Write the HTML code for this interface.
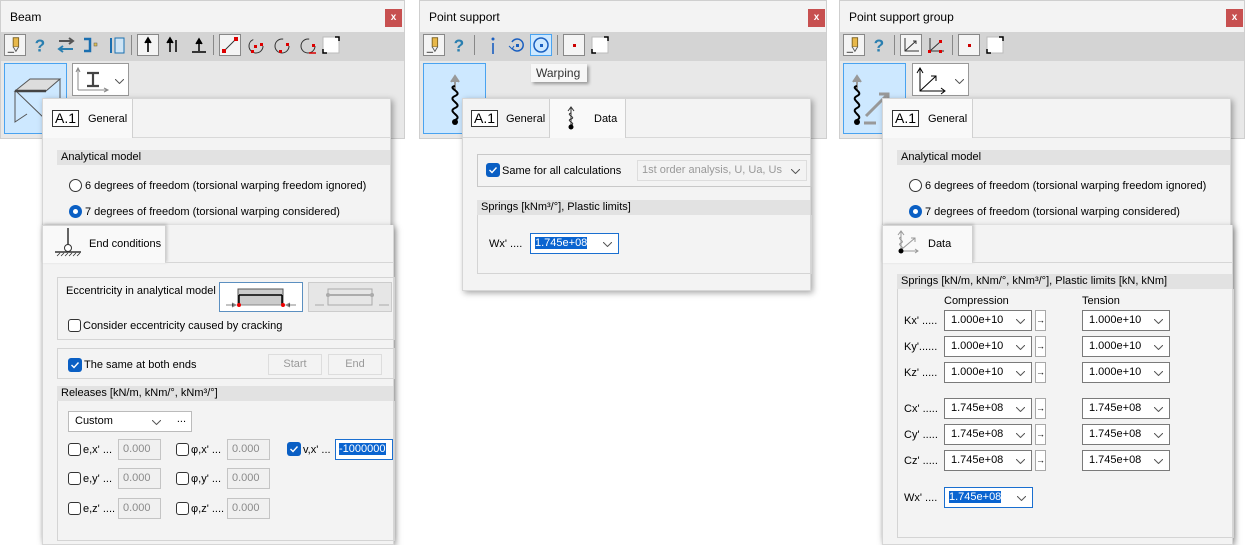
<!DOCTYPE html>
<html><head><meta charset="utf-8"><style>
body{margin:0;width:1245px;height:529px;background:#fff;position:relative;overflow:hidden;font:11px "Liberation Sans","DejaVu Sans",sans-serif;color:#000}
.a{position:absolute}
.t{position:absolute;white-space:nowrap;font-size:11px;line-height:14px}
.win{position:absolute;background:#e8e8e8;border:1px solid #cfcfcf;box-sizing:border-box}
.ttl{position:absolute;left:0;right:0;top:0;height:31px;background:#f3f3f3}
.tb{position:absolute;left:0;right:0;top:31px;height:29px;background:#d4d4d4}
.x{position:absolute;width:17px;height:18px;background:#c75050;color:#fff;font-size:10px;font-weight:bold;text-align:center;line-height:17px;top:8px}
.big{position:absolute;background:#cde8ff;border:1px solid #4aa3f0;box-sizing:border-box}
.pan{position:absolute;background:#f3f3f3;box-shadow:2px 2px 6px rgba(0,0,0,.35);border:1px solid #d6d6d6;box-sizing:border-box}
.tab{position:absolute;background:#f9f9f9;border-right:1px solid #d0d0d0;box-sizing:border-box}
.hd{position:absolute;background:#e2e2e2;height:15px;line-height:15px;padding-left:4px;box-sizing:border-box;white-space:nowrap}
.box{position:absolute;border:1px solid #d4d4d4;box-sizing:border-box}
.cb{position:absolute;width:13px;height:13px;border:1px solid #333;border-radius:3px;background:#fff;box-sizing:border-box}
.cbk{position:absolute;width:14px;height:14px;border-radius:3px;background:#0a5fc4}
.rd{position:absolute;width:13px;height:13px;border:1px solid #333;border-radius:50%;background:#fff;box-sizing:border-box}
.rds{position:absolute;width:13px;height:13px;border-radius:50%;background:#0a5fc4;box-sizing:border-box}
.rds:after{content:"";position:absolute;left:4px;top:4px;width:5px;height:5px;border-radius:50%;background:#fff}
.in{position:absolute;height:21px;background:#fff;border:1px solid #7a7a7a;box-sizing:border-box;line-height:19px;padding-left:6px;white-space:nowrap}
.in svg{position:absolute;right:6px;top:8px}
.dis{position:absolute;height:21px;background:#f0f0f0;border:1px solid #c4c4c4;box-sizing:border-box;line-height:19px;padding-left:4px;color:#8a8a8a;white-space:nowrap}
.ar{position:absolute;width:11px;height:21px;border:1px solid #a8a8a8;background:#fff;box-sizing:border-box;font-size:9px;line-height:19px;text-align:center}
.sel{background:#0a64d0;color:#fff}
.a1{position:absolute;border:1px solid #333;font-size:14px;line-height:15px;padding:0 2px;background:#fff}
.btn{position:absolute;border:1px solid #ddd;background:#f3f3f3;color:#999;text-align:center;line-height:19px;box-sizing:border-box;height:21px}
.tbi{position:absolute;top:34px;width:22px;height:22px;box-sizing:border-box}
.tbb{border:1px solid #888;background:#f4f4f4}
.sep{position:absolute;top:35px;width:1px;height:20px;background:#888}
</style></head><body>
<svg width="0" height="0" style="position:absolute"><defs>
<symbol id="chev" viewBox="0 0 9 5"><path d="M0 0L4.5 4.5L9 0" stroke="#555" fill="none"/></symbol>
<symbol id="pen" viewBox="0 0 22 22"><rect x="9" y="3" width="6" height="10" fill="#e8b84a" stroke="#7a6020"/><path d="M9 13L12 18L15 13" fill="#eee" stroke="#555"/><path d="M3 19H10" stroke="#333"/></symbol>
<symbol id="q" viewBox="0 0 22 22"><text x="4" y="18" font-size="19" font-weight="bold" fill="#2a7fb0" font-family="Liberation Sans">?</text></symbol>
<symbol id="chk" viewBox="0 0 14 14"><path d="M3.5 7L6 9.5L10.5 4.5" stroke="#fff" stroke-width="1.4" fill="none"/></symbol>
<symbol id="sqr" viewBox="0 0 22 22"><rect x="3" y="3" width="16" height="16" fill="#fff" stroke="#bbb"/><path d="M3 15V19H7M15 3H19V7" stroke="#000" stroke-width="1.5" fill="none"/></symbol>
</defs></svg>

<!-- ===== WINDOW 1: Beam ===== -->
<div class="win" style="left:0;top:0;width:405px;height:139px">
 <div class="ttl"><span class="t" style="left:9px;top:9px;font-size:12px">Beam</span><div class="x" style="left:384px">x</div></div>
 <div class="tb"></div>
</div>
<div class="tbi tbb" style="left:4px"><svg width="20" height="20"><use href="#pen"/></svg></div>
<svg class="a" style="left:31px;top:35px" width="20" height="20"><use href="#q"/></svg>
<svg class="a" style="left:55px;top:34px" width="22" height="22"><path d="M4 7H18M14 4L18 7L14 10" stroke="#555" stroke-width="2" fill="none"/><path d="M18 15H4M8 12L4 15L8 18" stroke="#2a7fb0" stroke-width="2" fill="none"/></svg>
<svg class="a" style="left:81px;top:34px" width="22" height="22"><path d="M3 5H9V17H3" stroke="#1a6fb0" stroke-width="2.5" fill="none"/><rect x="13" y="9" width="3" height="3" fill="#e0c050" stroke="#555" stroke-width=".5"/></svg>
<svg class="a" style="left:106px;top:34px" width="22" height="22"><rect x="9" y="4" width="9" height="15" fill="#cfe4f4" stroke="#1a6fb0"/><path d="M5 4V19" stroke="#1a6fb0" stroke-width="2"/></svg>
<div class="sep" style="left:131px"></div>
<div class="tbi tbb" style="left:137px"><svg width="20" height="20"><path d="M10 17V4M7 8L10 3L13 8" stroke="#000" stroke-width="1.6" fill="#000"/></svg></div>
<svg class="a" style="left:162px;top:34px" width="22" height="22"><path d="M8 18V5M5 9L8 4L11 9" stroke="#000" stroke-width="1.5" fill="#000"/><path d="M14 6V18" stroke="#000" stroke-width="1.5"/></svg>
<svg class="a" style="left:188px;top:34px" width="22" height="22"><path d="M11 17V6M8 10L11 5L14 10" stroke="#000" stroke-width="1.5" fill="#000"/><path d="M4 18H18" stroke="#000" stroke-width="1.5"/></svg>
<div class="sep" style="left:213px"></div>
<div class="tbi tbb" style="left:219px"><svg width="20" height="20"><path d="M4 16L16 4" stroke="#333"/><rect x="2" y="14" width="4" height="4" fill="#d00"/><rect x="14" y="2" width="4" height="4" fill="#d00"/></svg></div>
<svg class="a" style="left:245px;top:34px" width="22" height="22"><circle cx="11" cy="12" r="7" fill="none" stroke="#333" stroke-dasharray="30 14"/><rect x="9" y="11" width="3" height="3" fill="#d00"/><rect x="15" y="9" width="3" height="3" fill="#d00"/><rect x="6" y="16" width="3" height="3" fill="#d00"/></svg>
<svg class="a" style="left:271px;top:34px" width="22" height="22"><circle cx="11" cy="12" r="7" fill="none" stroke="#333" stroke-dasharray="34 10"/><rect x="15" y="9" width="3" height="3" fill="#d00"/><rect x="8" y="16" width="3" height="3" fill="#d00"/></svg>
<svg class="a" style="left:297px;top:34px" width="22" height="22"><circle cx="11" cy="12" r="7" fill="none" stroke="#333" stroke-dasharray="34 10"/><rect x="15" y="10" width="3" height="3" fill="#d00"/><path d="M12 19H19" stroke="#d00" stroke-width="1.5"/></svg>
<svg class="a" style="left:320px;top:34px" width="22" height="22"><use href="#sqr"/></svg>
<div class="big" style="left:4px;top:63px;width:63px;height:71px"><svg width="61" height="69"><path d="M10 27L25 15H55L41 27Z" fill="#ddd" stroke="#555"/><path d="M10 27V58L22 50" fill="none" stroke="#555"/><path d="M10 27H41" stroke="#444" stroke-width="2.5"/><path d="M12 28L40 55" stroke="#555"/><path d="M55 15V40" stroke="#555"/></svg></div>
<div class="a" style="left:72px;top:63px;width:57px;height:33px;background:#fff;border:1px solid #999;box-sizing:border-box"><svg width="40" height="31"><path d="M5 26V5M3 8L5 4L7 8M5 26H34M31 24L35 26L31 28" stroke="#888" fill="none"/><path d="M14 9H26M20 9V22M14 22H26" stroke="#444" stroke-width="2.2"/></svg><svg class="a" style="left:42px;top:15px" width="9" height="5"><use href="#chev"/></svg></div>

<!-- panel 1 General -->
<div class="pan" style="left:42px;top:98px;width:349px;height:440px">
 <div class="a" style="left:0;top:0;right:0;height:38px;border-bottom:1px solid #d8d8d8;background:#f3f3f3"></div>
 <div class="tab" style="left:0;top:0;width:90px;height:39px"></div>
 <span class="a1" style="left:9px;top:11px">A.1</span><span class="t" style="left:45px;top:13px">General</span>
 <div class="hd" style="left:14px;top:51px;right:0">Analytical model</div>
 <div class="rd" style="left:26px;top:80px"></div><span class="t" style="left:42px;top:80px">6 degrees of freedom (torsional warping freedom ignored)</span>
 <div class="rds" style="left:26px;top:106px"></div><span class="t" style="left:42px;top:106px">7 degrees of freedom (torsional warping considered)</span>
</div>
<!-- panel 2 End conditions -->
<div class="pan" style="left:42px;top:225px;width:352px;height:320px;border-top:none">
 <div class="tab" style="left:-1px;top:0;width:124px;height:38px;border-top:1px solid #d6d6d6;border-left:1px solid #d6d6d6;box-shadow:1px -1px 3px rgba(0,0,0,.2)"></div>
 <div class="a" style="left:122px;top:37px;right:0;height:1px;background:#d6d6d6"></div>
 <svg class="a" style="left:10px;top:2px" width="30" height="30"><path d="M15 1V18" stroke="#333" stroke-width="1.5"/><circle cx="15" cy="21" r="3.5" fill="#fff" stroke="#333"/><path d="M2 25H28" stroke="#333" stroke-width="1.5"/><path d="M4 29L7 26M8 29L11 26M12 29L15 26M16 29L19 26M20 29L23 26M24 29L27 26" stroke="#333" stroke-width=".8"/></svg>
 <span class="t" style="left:46px;top:12px">End conditions</span>
 <div class="box" style="left:14px;top:52px;width:338px;height:63px"></div>
 <span class="t" style="left:23px;top:59px">Eccentricity in analytical model</span>
 <div class="a" style="left:176px;top:57px;width:84px;height:30px;background:#fff;border:1px solid #5b8fc0;box-sizing:border-box"><svg width="82" height="28"><rect x="18" y="6" width="45" height="16" fill="#ccc" stroke="#555"/><path d="M19 12H62M19 12V22M62 12V22" stroke="#000" stroke-width="1.5"/><path d="M19 22H62" stroke="#888"/><path d="M6 22H15M12 20L16 22L12 24M76 22H67M70 20L66 22L70 24" stroke="#888"/><circle cx="19" cy="22" r="2" fill="#e00"/><circle cx="63" cy="22" r="2" fill="#e00"/></svg></div>
 <div class="a" style="left:265px;top:57px;width:84px;height:30px;background:#e6e6e6;border:1px solid #ccc;box-sizing:border-box"><svg width="82" height="28"><path d="M19 6H63V22H19Z" fill="none" stroke="#aaa"/><path d="M19 12H63" stroke="#999" stroke-width="1.5"/><path d="M6 22H15M70 22H80" stroke="#aaa"/><circle cx="19" cy="12" r="2" fill="#aaa"/><circle cx="63" cy="12" r="2" fill="#aaa"/></svg></div>
 <div class="cb" style="left:25px;top:94px"></div><span class="t" style="left:40px;top:94px">Consider eccentricity caused by cracking</span>
 <div class="box" style="left:14px;top:123px;width:338px;height:31px"></div>
 <div class="cbk" style="left:25px;top:133px"><svg width="14" height="14"><use href="#chk"/></svg></div><span class="t" style="left:41px;top:133px">The same at both ends</span>
 <div class="btn" style="left:225px;top:129px;width:54px">Start</div>
 <div class="btn" style="left:285px;top:129px;width:54px">End</div>
 <div class="hd" style="left:14px;top:161px;right:0">Releases [kN/m, kNm/°, kNm³/°]</div>
 <div class="box" style="left:14px;top:176px;width:338px;height:140px;border-top:none"></div>
 <div class="in" style="left:25px;top:186px;width:124px;border-color:#bbb">Custom<svg width="9" height="5" style="right:30px"><use href="#chev"/></svg><span class="a" style="right:5px;top:-2px">...</span></div>
 <div class="cb" style="left:25px;top:218px"></div><span class="t" style="left:40px;top:218px">e,x' ...</span><div class="dis" style="left:75px;top:214px;width:43px">0.000</div>
 <div class="cb" style="left:133px;top:218px"></div><span class="t" style="left:148px;top:218px">φ,x' ...</span><div class="dis" style="left:184px;top:214px;width:43px">0.000</div>
 <div class="cbk" style="left:244px;top:217px"><svg width="14" height="14"><use href="#chk"/></svg></div><span class="t" style="left:260px;top:218px">v,x' ...</span>
 <div class="in" style="left:292px;top:214px;width:58px;border-color:#1a6fd0;padding-left:3px"><span class="sel">-1000000</span></div>
 <div class="cb" style="left:25px;top:247px"></div><span class="t" style="left:40px;top:247px">e,y' ...</span><div class="dis" style="left:75px;top:243px;width:43px">0.000</div>
 <div class="cb" style="left:133px;top:247px"></div><span class="t" style="left:148px;top:247px">φ,y' ...</span><div class="dis" style="left:184px;top:243px;width:43px">0.000</div>
 <div class="cb" style="left:25px;top:277px"></div><span class="t" style="left:40px;top:277px">e,z' ....</span><div class="dis" style="left:75px;top:273px;width:43px">0.000</div>
 <div class="cb" style="left:133px;top:277px"></div><span class="t" style="left:148px;top:277px">φ,z' ....</span><div class="dis" style="left:184px;top:273px;width:43px">0.000</div>
</div>

<!-- ===== WINDOW 2: Point support ===== -->
<div class="win" style="left:419px;top:0;width:408px;height:139px">
 <div class="ttl"><span class="t" style="left:9px;top:9px;font-size:12px">Point support</span><div class="x" style="left:388px">x</div></div>
 <div class="tb"></div>
</div>
<div class="tbi tbb" style="left:423px"><svg width="20" height="20"><use href="#pen"/></svg></div>
<svg class="a" style="left:450px;top:35px" width="20" height="20"><use href="#q"/></svg>
<div class="sep" style="left:474px"></div>
<svg class="a" style="left:482px;top:34px" width="22" height="22"><path d="M11 9V20" stroke="#1a5fc0" stroke-width="1.6"/><circle cx="11" cy="5" r="1.5" fill="#1a5fc0"/></svg>
<svg class="a" style="left:506px;top:34px" width="22" height="22"><path d="M6 14A6 6 0 1 0 6 8" stroke="#1a5fc0" stroke-width="1.5" fill="none"/><path d="M3 12L6 15L8 12" stroke="#1a5fc0" fill="none"/><rect x="10" y="10" width="3" height="3" fill="#1a5fc0"/></svg>
<div class="tbi" style="left:530px;background:#cde8ff;border:1px solid #4aa3f0"><svg width="20" height="20"><circle cx="10" cy="10" r="7" fill="none" stroke="#1a5fc0" stroke-width="1.5"/><rect x="9" y="9" width="3" height="3" fill="#1a5fc0"/></svg></div>
<div class="sep" style="left:557px"></div>
<div class="tbi tbb" style="left:563px"><svg width="20" height="20"><rect x="9" y="9" width="3" height="3" fill="#c00"/></svg></div>
<svg class="a" style="left:589px;top:34px" width="22" height="22"><use href="#sqr"/></svg>
<div class="big" style="left:423px;top:63px;width:63px;height:71px"><svg width="61" height="69"><path d="M31 26V14M27 18L31 12L35 18" stroke="#999" stroke-width="2" fill="#999"/><path d="M31 22C22 24 40 28 31 32C22 36 40 40 31 44C22 48 40 52 31 56" stroke="#000" stroke-width="2" fill="none"/><circle cx="31" cy="58" r="3" fill="#000"/></svg></div>
<div class="a" style="left:531px;top:64px;width:56px;height:18px;background:#f7f7f7;box-shadow:2px 2px 3px rgba(0,0,0,.35)"><span class="t" style="left:5px;top:2px;color:#333;font-size:12px">Warping</span></div>
<div class="pan" style="left:462px;top:98px;width:349px;height:193px">
 <div class="a" style="left:0;top:0;right:0;height:38px;border-bottom:1px solid #d8d8d8;background:#f3f3f3"></div>
 <span class="a1" style="left:8px;top:11px">A.1</span><span class="t" style="left:43px;top:13px">General</span>
 <div class="tab" style="left:86px;top:0;width:77px;height:39px;border-left:1px solid #d0d0d0"></div>
 <svg class="a" style="left:100px;top:6px" width="16" height="26"><path d="M8 2V22" stroke="#333"/><path d="M5 6L8 2L11 6" stroke="#333" fill="none"/><path d="M8 8C2 10 14 12 8 14C2 16 14 18 8 20" stroke="#333" fill="none"/><circle cx="8" cy="22" r="2.5" fill="#000"/></svg>
 <span class="t" style="left:131px;top:13px">Data</span>
 <div class="box" style="left:14px;top:55px;width:335px;height:33px;border-color:#c8c8c8"></div>
 <div class="cbk" style="left:23px;top:64px"><svg width="14" height="14"><use href="#chk"/></svg></div><span class="t" style="left:39px;top:65px">Same for all calculations</span>
 <div class="dis" style="left:174px;top:61px;width:170px;color:#999;background:#f3f3f3;border-color:#ddd">1st order analysis, U, Ua, Us<svg class="a" style="right:6px;top:8px" width="9" height="5"><use href="#chev"/></svg></div>
 <div class="hd" style="left:14px;top:101px;right:0">Springs [kNm³/°], Plastic limits]</div>
 <div class="box" style="left:14px;top:116px;width:335px;height:59px;border-top:none"></div>
 <span class="t" style="left:26px;top:138px">Wx' ....</span>
 <div class="in" style="left:67px;top:134px;width:89px;border-color:#1a6fd0;padding-left:4px"><span class="sel">1.745e+08</span><svg width="9" height="5"><use href="#chev"/></svg></div>
</div>

<!-- ===== WINDOW 3: Point support group ===== -->
<div class="win" style="left:839px;top:0;width:406px;height:139px">
 <div class="ttl"><span class="t" style="left:9px;top:9px;font-size:12px">Point support group</span><div class="x" style="left:386px">x</div></div>
 <div class="tb"></div>
</div>
<div class="tbi tbb" style="left:843px"><svg width="20" height="20"><use href="#pen"/></svg></div>
<svg class="a" style="left:870px;top:35px" width="20" height="20"><use href="#q"/></svg>
<div class="sep" style="left:894px"></div>
<div class="tbi tbb" style="left:900px"><svg width="20" height="20"><path d="M4 3V16H18M4 16L15 6M12 6H15V9" stroke="#333" fill="none"/></svg></div>
<svg class="a" style="left:925px;top:34px" width="22" height="22"><path d="M5 4V17H19M5 17L15 8" stroke="#333" fill="none"/><rect x="3" y="16" width="3" height="3" fill="#d00"/><rect x="14" y="16" width="3" height="3" fill="#d00"/><rect x="14" y="6" width="3" height="3" fill="#d00"/></svg>
<div class="sep" style="left:952px"></div>
<div class="tbi tbb" style="left:958px"><svg width="20" height="20"><rect x="9" y="9" width="3" height="3" fill="#c00"/></svg></div>
<svg class="a" style="left:984px;top:34px" width="22" height="22"><use href="#sqr"/></svg>
<div class="big" style="left:843px;top:63px;width:63px;height:71px"><svg width="61" height="69"><path d="M13 26V14M9 18L13 12L17 18" stroke="#999" stroke-width="2" fill="#999"/><path d="M13 22C5 24 21 28 13 32C5 36 21 40 13 44C5 48 21 52 13 56" stroke="#000" stroke-width="2" fill="none"/><circle cx="13" cy="58" r="3" fill="#000"/><path d="M22 52L43 31M35 30H44V39" stroke="#999" stroke-width="3" fill="none"/><path d="M20 59H32" stroke="#999" stroke-width="3"/></svg></div>
<div class="a" style="left:912px;top:63px;width:57px;height:33px;background:#fff;border:1px solid #999;box-sizing:border-box"><svg width="40" height="31"><path d="M7 5V27H31M7 27L23 12" stroke="#000" fill="none"/><path d="M4 9L7 4L10 9M28 24L32 27L28 30M18 12H23V17" stroke="#000" fill="none"/></svg><svg class="a" style="left:42px;top:15px" width="9" height="5"><use href="#chev"/></svg></div>
<div class="pan" style="left:882px;top:98px;width:349px;height:440px">
 <div class="a" style="left:0;top:0;right:0;height:38px;border-bottom:1px solid #d8d8d8;background:#f3f3f3"></div>
 <div class="tab" style="left:0;top:0;width:90px;height:39px"></div>
 <span class="a1" style="left:9px;top:11px">A.1</span><span class="t" style="left:45px;top:13px">General</span>
 <div class="hd" style="left:14px;top:51px;right:0">Analytical model</div>
 <div class="rd" style="left:26px;top:80px"></div><span class="t" style="left:42px;top:80px">6 degrees of freedom (torsional warping freedom ignored)</span>
 <div class="rds" style="left:26px;top:106px"></div><span class="t" style="left:42px;top:106px">7 degrees of freedom (torsional warping considered)</span>
</div>
<div class="pan" style="left:882px;top:225px;width:351px;height:320px;border-top:none">
 <div class="tab" style="left:-1px;top:0;width:91px;height:38px;border-top:1px solid #d6d6d6;border-left:1px solid #d6d6d6;box-shadow:1px -1px 3px rgba(0,0,0,.2)"></div>
 <div class="a" style="left:89px;top:37px;right:0;height:1px;background:#d6d6d6"></div>
 <svg class="a" style="left:10px;top:4px" width="28" height="28"><path d="M8 2V22M5 6L8 2L11 6" stroke="#999" fill="none"/><path d="M8 8C3 10 13 12 8 14C3 16 13 18 8 20" stroke="#999" fill="none"/><path d="M9 20L22 9M18 9H22V13M9 22H25M22 20L25 22L22 24" stroke="#999" fill="none"/><circle cx="8" cy="22" r="2.5" fill="#000"/></svg>
 <span class="t" style="left:45px;top:12px">Data</span>
 <div class="hd" style="left:14px;top:49px;right:0">Springs [kN/m, kNm/°, kNm³/°], Plastic limits [kN, kNm]</div>
 <div class="box" style="left:14px;top:64px;width:337px;height:249px;border-top:none"></div>
 <span class="t" style="left:61px;top:69px">Compression</span><span class="t" style="left:199px;top:69px">Tension</span>

 <span class="t" style="left:21px;top:89px">Kx' .....</span><div class="in" style="left:61px;top:85px;width:88px">1.000e+10<svg width="9" height="5"><use href="#chev"/></svg></div><div class="ar" style="left:152px;top:85px">→</div><div class="in" style="left:199px;top:85px;width:88px">1.000e+10<svg width="9" height="5"><use href="#chev"/></svg></div>
 <span class="t" style="left:21px;top:115px">Ky'......</span><div class="in" style="left:61px;top:111px;width:88px">1.000e+10<svg width="9" height="5"><use href="#chev"/></svg></div><div class="ar" style="left:152px;top:111px">→</div><div class="in" style="left:199px;top:111px;width:88px">1.000e+10<svg width="9" height="5"><use href="#chev"/></svg></div>
 <span class="t" style="left:21px;top:141px">Kz' .....</span><div class="in" style="left:61px;top:137px;width:88px">1.000e+10<svg width="9" height="5"><use href="#chev"/></svg></div><div class="ar" style="left:152px;top:137px">→</div><div class="in" style="left:199px;top:137px;width:88px">1.000e+10<svg width="9" height="5"><use href="#chev"/></svg></div>

 <span class="t" style="left:21px;top:177px">Cx' .....</span><div class="in" style="left:61px;top:173px;width:88px">1.745e+08<svg width="9" height="5"><use href="#chev"/></svg></div><div class="ar" style="left:152px;top:173px">→</div><div class="in" style="left:199px;top:173px;width:88px">1.745e+08<svg width="9" height="5"><use href="#chev"/></svg></div>
 <span class="t" style="left:21px;top:203px">Cy' .....</span><div class="in" style="left:61px;top:199px;width:88px">1.745e+08<svg width="9" height="5"><use href="#chev"/></svg></div><div class="ar" style="left:152px;top:199px">→</div><div class="in" style="left:199px;top:199px;width:88px">1.745e+08<svg width="9" height="5"><use href="#chev"/></svg></div>
 <span class="t" style="left:21px;top:229px">Cz' .....</span><div class="in" style="left:61px;top:225px;width:88px">1.745e+08<svg width="9" height="5"><use href="#chev"/></svg></div><div class="ar" style="left:152px;top:225px">→</div><div class="in" style="left:199px;top:225px;width:88px">1.745e+08<svg width="9" height="5"><use href="#chev"/></svg></div>

 <span class="t" style="left:21px;top:266px">Wx' ....</span><div class="in" style="left:61px;top:262px;width:89px;border-color:#1a6fd0;padding-left:4px"><span class="sel">1.745e+08</span><svg width="9" height="5"><use href="#chev"/></svg></div>
</div>
</body></html>
